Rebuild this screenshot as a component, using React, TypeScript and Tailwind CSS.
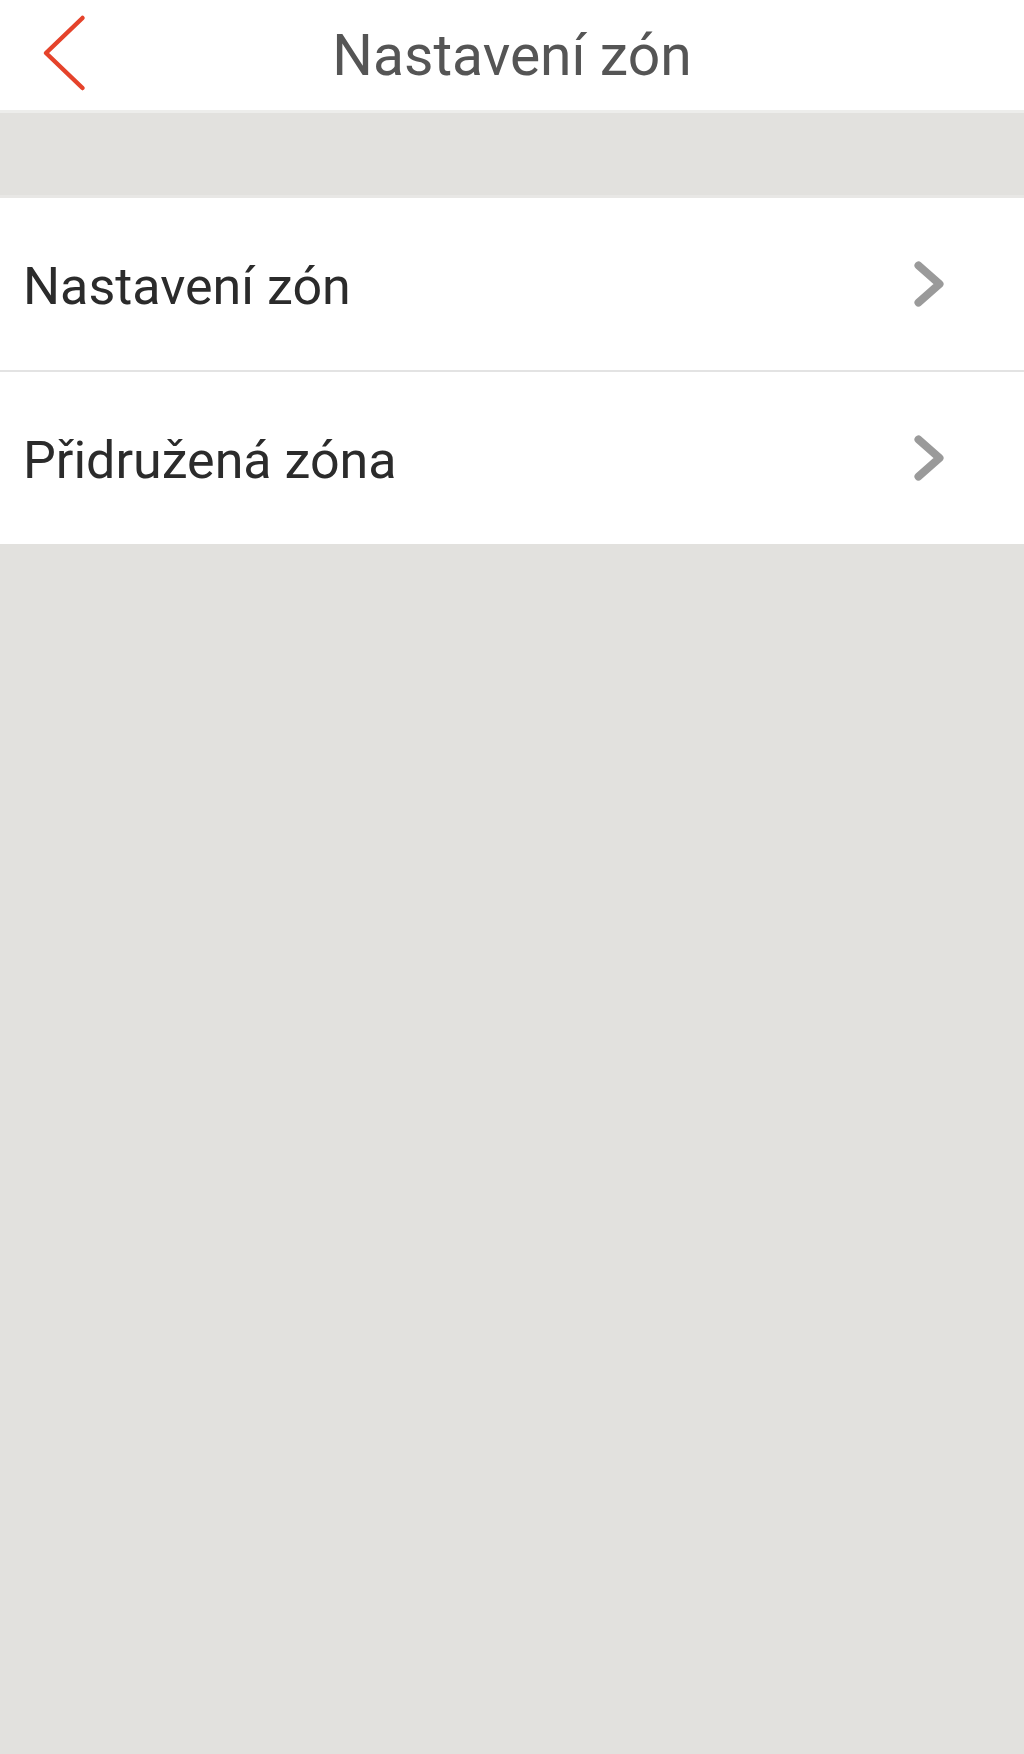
import React from "react";

function Row({ label }: { label: string }) {
  return (
    <div className="flex h-[172px] items-center justify-between bg-white pl-[23px] pr-[80px]">
      <span className="mt-[5px] text-[52px] leading-none text-[#2b2b2b]">{label}</span>
      <svg width="30" height="46" viewBox="0 0 30 46" className="block">
        <path d="M4.5 4.5 L25.5 23 L4.5 41.5" fill="none" stroke="#9a9a9a" strokeWidth="8" strokeLinecap="round" strokeLinejoin="round" />
      </svg>
    </div>
  );
}

export default function App() {
  return (
    <div className="flex min-h-[1754px] w-full flex-col bg-[#e2e1de]" style={{ fontFamily: "Roboto, 'Noto Sans', sans-serif" }}>
      <header className="relative flex h-[110px] items-center justify-center bg-white">
        <button className="absolute left-[40px] top-[14px] block">
          <svg width="50" height="80" viewBox="0 0 50 80">
            <path d="M42.5 4 L6 39 L42.5 74" fill="none" stroke="#e5432b" strokeWidth="4.5" strokeLinecap="round" strokeLinejoin="round" />
          </svg>
        </button>
        <h1 className="text-[57px] font-normal leading-none text-[#555555]">Nastavení zón</h1>
      </header>
      <div className="h-[3px] bg-[#ededeb]" />
      <div className="h-[82px]" />
      <div className="h-[3px] bg-[#e8e7e5]" />
      <Row label="Nastavení zón" />
      <div className="h-[2px] bg-[#e3e3e3]" />
      <Row label="Přidružená zóna" />
    </div>
  );
}
